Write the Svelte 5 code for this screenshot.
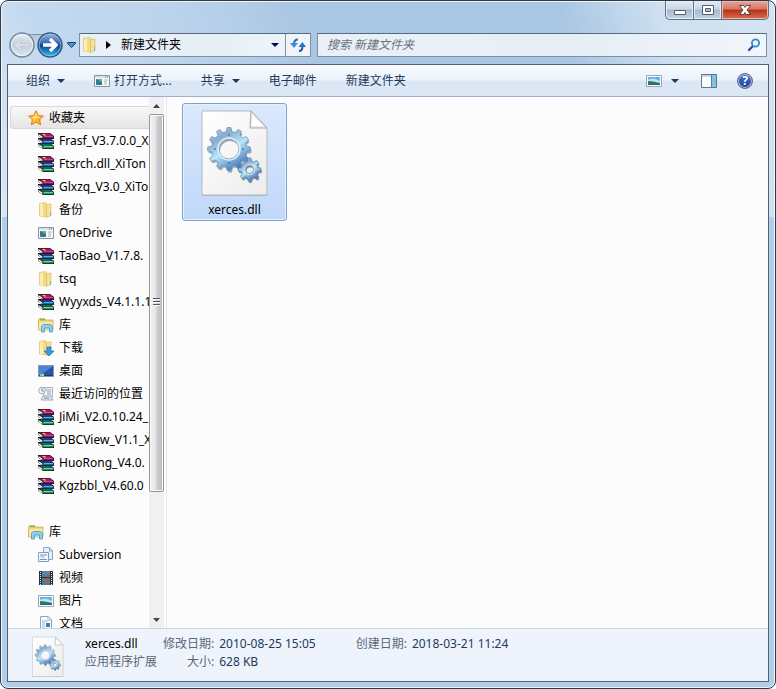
<script lang="ts">
  const favorites = [
    { name: 'Frasf_V3.7.0.0_X', icon: 'rar' },
    { name: 'Ftsrch.dll_XiTon', icon: 'rar' },
    { name: 'Glxzq_V3.0_XiTo', icon: 'rar' },
    { name: '备份', icon: 'folder' },
    { name: 'OneDrive', icon: 'app' },
    { name: 'TaoBao_V1.7.8.', icon: 'rar' },
    { name: 'tsq', icon: 'folder' },
    { name: 'Wyyxds_V4.1.1.1', icon: 'rar' },
    { name: '库', icon: 'library' },
    { name: '下载', icon: 'download' },
    { name: '桌面', icon: 'desktop' },
    { name: '最近访问的位置', icon: 'recent' },
    { name: 'JiMi_V2.0.10.24_', icon: 'rar' },
    { name: 'DBCView_V1.1_X', icon: 'rar' },
    { name: 'HuoRong_V4.0.', icon: 'rar' },
    { name: 'Kgzbbl_V4.60.0', icon: 'rar' }
  ];

  const libraries = [
    { name: 'Subversion', icon: 'documents' },
    { name: '视频', icon: 'video' },
    { name: '图片', icon: 'picture' },
    { name: '文档', icon: 'text' }
  ];

  const groups = [
    { title: '收藏夹', icon: 'star', items: favorites },
    { title: '库', icon: 'library', items: libraries }
  ];

  // Books of the archive icon, bottom one first
  const books = [
    { y: 10, cover: '#0e6b46', spine: '#1f9a66', shine: '#7fe0b4' },
    { y: 5, cover: '#123f86', spine: '#1a62b5', shine: '#7fc0f0' },
    { y: 0, cover: '#a8196b', spine: '#8c0f55', shine: '#e05aa6' }
  ];

  let selectedGroup = $state('收藏夹');
  let selectedFile = $state(true);
  let query = $state('');

  // Outline of a cog with a round hole, drawn with the evenodd rule
  function gear(cx: number, cy: number, teeth: number, outer: number, inner: number, hole: number) {
    const step = (Math.PI * 2) / teeth;
    const points: string[] = [];
    const add = (r: number, a: number) =>
      points.push(`${(cx + r * Math.cos(a)).toFixed(2)} ${(cy + r * Math.sin(a)).toFixed(2)}`);
    for (let i = 0; i < teeth; i++) {
      const a = i * step - Math.PI / 2;
      add(inner, a - step * 0.32);
      add(outer, a - step * 0.17);
      add(outer, a + step * 0.17);
      add(inner, a + step * 0.32);
    }
    return `M${points.join('L')}Z M${cx - hole} ${cy}a${hole} ${hole} 0 1 0 ${hole * 2} 0a${hole} ${hole} 0 1 0 ${-hole * 2} 0Z`;
  }

  const bigGear = gear(28, 39, 12, 21.5, 17.5, 10);
  const smallGear = gear(48.5, 59.5, 8, 11.5, 8.5, 4);
</script>

{#snippet icon(name: string)}
  <svg class="icon" viewBox="0 0 16 16" aria-hidden="true">
    {#if name === 'rar'}
      {#each books as book}
        <g transform="translate(0 {book.y})">
          <path d="M0 0h12l4 3v3H5L0 2.5z" fill="#1a1018" />
          <path d="M1 .6h10.600l3.600 2.400H5z" fill={book.cover} />
          <path d="M5 3h10.500v2.300H5z" fill={book.spine} />
          <path d="M6 3h9v.8H6z" fill={book.shine} />
          <path d="M.4 1l4 2.500v1.700l-4-2.700z" fill="#fff" />
        </g>
      {/each}
      <path d="M4 1h3l1 1.500H6z" fill="#f0cf2a" />
    {:else if name === 'folder' || name === 'download'}
      <path d="M1.500 1.500l6-1 1 1v13.500l-7-1z" fill="#f4db83" stroke="#d9bd68" stroke-width=".6" />
      <path d="M2 2l3-.500v13L2 14z" fill="#fbeeb4" />
      <path d="M8.500 2.500l4.500-.500v11.500l-4.500 2z" fill="#f7e293" stroke="#d2b45c" stroke-width=".6" />
      <path d="M12.500 10v4" stroke="#75b7da" />
      {#if name === 'download'}
        <path d="M9 7h4v4h3l-5 5-5-5h3z" fill="#359be4" stroke="#176fb9" stroke-width=".7" />
      {/if}
    {:else if name === 'app'}
      <path d="M.5 2.5h15v11H.5z" fill="#f7f9fa" stroke="#89959c" />
      <path d="M1 3h14v2H1z" fill="#dbe3e8" />
      <path d="M2 6h6v6H2z" fill="#347d91" />
      <path d="M2 6h6v3z" fill="#69ad9a" />
      <path d="M10 7h4M10 9h3M10 11h3" stroke="#a9b6c0" />
      <path d="M11 4h3" stroke="#526b7a" stroke-dasharray="1 1" />
    {:else if name === 'library'}
      <path d="M.500 3l1-1.500h5l1 1.500h7.500V13H.500z" fill="#f2d876" stroke="#c5a13f" stroke-width=".7" />
      <path d="M1 5h13.500v7.500H1z" fill="#fae9a5" />
      <path d="M2 2.800h5" stroke="#59ad65" />
      <path d="M3.500 15V9l2-1.500h7l2 1.500v6h-3v-4h-5v4z" fill="#8bd0ee" stroke="#399bca" stroke-width=".8" />
    {:else if name === 'desktop'}
      <path d="M.5 2.500h15v11H.5z" fill="#2456a8" stroke="#8797a9" />
      <path d="M1 3h14L3 12H1z" fill="#4c85d4" />
      <path d="M1 12h14v1H1z" fill="#173c70" />
      <path d="M2 11h2v2H2z" fill="#61d4ae" />
      <path d="M4 11h2v2H4z" fill="#f2cb49" />
    {:else if name === 'recent'}
      <path d="M5.5 1.5h9v9h-9z" fill="#eef2f5" stroke="#aab3bc" />
      <path d="M7 4h6M9 6h4M9 8h4" stroke="#91a7b9" />
      <path d="M5 10h8l2 4H3z" fill="#e2e8eb" stroke="#9faab3" />
      <circle cx="4" cy="4.500" r="3.300" fill="#f3f5f7" stroke="#a4adb7" />
      <path d="M4 2v3h2M6 12h5" fill="none" stroke="#738ca2" />
    {:else if name === 'star'}
      <path d="M8 .8l2.200 4.700 5.200.6-3.800 3.500 1 5.200L8 12.200l-4.600 2.600 1-5.200L.6 6.100l5.200-.6z" fill="#ffb32f" stroke="#e87b16" />
      <path d="M8 2.500l1.400 4 4 .6L8 8.500 5 12l.6-3-3-2 3.700-.5z" fill="#ffe16d" />
    {:else if name === 'documents'}
      <path d="M5.500.5h6l3 3v9h-9z" fill="#e5effa" stroke="#8ba9c9" />
      <path d="M11.500 1v3h3" fill="none" stroke="#8ba9c9" />
      <path d="M.5 5.500h10v9H.5z" fill="#f4f8fd" stroke="#7f9fc2" />
      <path d="M2 8h7M2 12.500h7" stroke="#6e97c3" />
      <path d="M2.500 10h4" stroke="#86abd4" />
    {:else if name === 'video'}
      <path d="M1 1h14v14H1z" fill="#25353d" />
      <path d="M4 1h8v6H4z" fill="#408cb9" />
      <path d="M4 8h8v7H4z" fill="#337fae" />
      <path d="M5 4l3 2 4-3v4H4zM6 8l3 3 3-1v3l-5 1z" fill="#b85d42" />
      <path d="M2.500 2v13M13.500 2v13" stroke="#e5edf0" stroke-dasharray="1 1" />
    {:else if name === 'picture'}
      <path d="M.5 2.500h15v11H.5z" fill="#fff" stroke="#9aa8b3" />
      <path d="M2 4h12v8H2z" fill="#66b4e9" />
      <path d="M2 7q4-3 12 1v4H2z" fill="#bee7f4" />
      <path d="M2 8q5 0 12 2v2H2z" fill="#35785d" />
      <path d="M2 11h12v1H2z" fill="#1f629e" />
    {:else if name === 'text'}
      <path d="M2.500.5h8l3 3v12h-11z" fill="#fbfdff" stroke="#91a8bb" />
      <path d="M10 1v3h3M4 5h6M4 7h3M4 9h3M4 11h3M4 13h7" fill="none" stroke="#9db3c8" />
      <path d="M8 7h4v4H8z" fill="#327fbc" />
    {/if}
  </svg>
{/snippet}

{#snippet dllIcon()}
  <svg class="dll" viewBox="0 0 68 87" aria-hidden="true">
    <defs>
      <linearGradient id="paper" x2="1" y2="1">
        <stop stop-color="#fff" />
        <stop offset="1" stop-color="#ececec" />
      </linearGradient>
      <linearGradient id="steel" x2=".6" y2="1">
        <stop stop-color="#c3d3e6" />
        <stop offset=".3" stop-color="#86add2" />
        <stop offset=".6" stop-color="#b6e6fb" />
        <stop offset="1" stop-color="#4579b5" />
      </linearGradient>
    </defs>
    <path d="M2 2h49l15 17v67H2z" fill="#6e7d8c" opacity=".35" />
    <path d="M1 1h49l16 17v67H1z" fill="url(#paper)" stroke="#b5b8bc" />
    <path d="M50 1l-1 17h17z" fill="#e9ebed" stroke="#a8acb0" />
    <path d="M51 4v12h11z" fill="#fff" />
    <path d={bigGear} transform="translate(1 2)" fill="#455e75" opacity=".5" fill-rule="evenodd" />
    <path d={bigGear} fill="url(#steel)" stroke="#6990b2" stroke-width=".7" fill-rule="evenodd" />
    <circle cx="28" cy="39" r="11" fill="none" stroke="#e2edf6" stroke-width="1.5" />
    <g fill="#51799c">
      <circle cx="28" cy="25" r="1" />
      <circle cx="42" cy="39" r="1" />
      <circle cx="28" cy="53" r="1" />
      <circle cx="14" cy="39" r="1" />
    </g>
    <path d={smallGear} transform="translate(1 2)" fill="#3d566f" opacity=".6" fill-rule="evenodd" />
    <path d={smallGear} fill="url(#steel)" stroke="#527ca2" stroke-width=".7" fill-rule="evenodd" />
    <circle cx="48.5" cy="59.5" r="5" fill="none" stroke="#d9eaf7" />
  </svg>
{/snippet}

{#snippet caret()}
  <svg class="caret" viewBox="0 0 8 4" aria-hidden="true"><path d="M0 0h8L4 4z" fill="currentColor" /></svg>
{/snippet}

<div class="window">
  <header>
    <div class="caption">
      <button aria-label="最小化">
        <svg viewBox="0 0 14 12"><path d="M1.500 6.500h11v4h-11z" fill="#fff" stroke="#535d6b" /></svg>
      </button>
      <button aria-label="最大化">
        <svg viewBox="0 0 14 12">
          <path d="M1.500 1.500h11v9h-11z" fill="#fff" stroke="#535d6b" />
          <path d="M4.500 4.500h5v3h-5z" fill="#a9bfd8" stroke="#535d6b" />
        </svg>
      </button>
      <button class="close" aria-label="关闭">
        <svg viewBox="0 0 14 12">
          <path d="M1.500 1.500h4L7 3.500l1.500-2h4L9 6l3.500 4.500h-4L7 8.500l-1.500 2h-4L5 6z" fill="#fff" stroke="#5f4246" />
        </svg>
      </button>
    </div>

    <div class="navigation">
      <div class="history">
        <button class="round" aria-label="后退" disabled>
          <svg viewBox="0 0 26 26">
            <defs>
              <linearGradient id="back" x2="0" y2="1">
                <stop stop-color="#e9eff5" />
                <stop offset=".5" stop-color="#c6d0da" />
                <stop offset="1" stop-color="#dde8f2" />
              </linearGradient>
            </defs>
            <circle cx="13" cy="13" r="12" fill="url(#back)" stroke="#76889a" stroke-width="1.5" />
            <circle cx="13" cy="13" r="10.6" fill="none" stroke="#eef4f8" />
            <path d="M20 13H8M13 7l-6 6 6 6" fill="none" stroke="#b7c3ce" stroke-width="3.6" />
            <path d="M20 13H8M13 7l-6 6 6 6" fill="none" stroke="#d5dee6" stroke-width="2.6" />
          </svg>
        </button>
        <button class="round" aria-label="前进">
          <svg viewBox="0 0 26 26">
            <defs>
              <linearGradient id="forward" x2="0" y2="1">
                <stop stop-color="#9dbbe4" />
                <stop offset=".45" stop-color="#2b62b1" />
                <stop offset=".5" stop-color="#093d91" />
                <stop offset="1" stop-color="#36c0f1" />
              </linearGradient>
            </defs>
            <circle cx="13" cy="13" r="12" fill="url(#forward)" stroke="#38597f" stroke-width="1.5" />
            <circle cx="13" cy="13" r="10.8" fill="none" stroke="#a9cbe9" stroke-width=".7" />
            <path d="M6 13h12M13 7l6 6-6 6" fill="none" stroke="#fff" stroke-width="3.400" />
          </svg>
        </button>
        <button class="recent" aria-label="最近浏览的位置">
          <svg viewBox="0 0 9 7"><path d="M.5.5h8v1l-4 4-4-4z" fill="#479ad1" stroke="#1d426c" /></svg>
        </button>
      </div>

      <div class="address">
        {@render icon('folder')}
        <button class="crumb">
          <svg viewBox="0 0 5 8"><path d="M0 0l5 4-5 4z" /></svg>
          新建文件夹
        </button>
        <button class="drop" aria-label="以前的位置">{@render caret()}</button>
        <button class="refresh" aria-label="刷新">
          <svg viewBox="0 0 16 14">
            <path d="M8 1.500C5 1.500 4 3 4 6" fill="none" stroke="#2b6fb5" stroke-width="2" />
            <path d="M9 13c3 0 3.500-2 3.500-5" fill="none" stroke="#24569a" stroke-width="2" />
            <path d="M0 5h8L4 10z" fill="#3b8fd6" />
            <path d="M8.500 9l4-5 3.500 5z" fill="#2f71b8" />
          </svg>
        </button>
      </div>

      <label class="search">
        <input type="text" aria-label="搜索" placeholder="搜索 新建文件夹" bind:value={query} />
        <svg viewBox="0 0 14 14" aria-hidden="true">
          <path d="M2 12l4-4" stroke="#2f4e92" stroke-width="2.400" stroke-linecap="round" />
          <circle cx="8.500" cy="5" r="3.600" fill="#e8f5fd" stroke="#358bca" stroke-width="1.800" />
        </svg>
      </label>
    </div>
  </header>

  <div class="client">
    <div class="toolbar" role="toolbar" aria-label="命令">
      <button>组织 {@render caret()}</button>
      <button class="open">{@render icon('app')} 打开方式...</button>
      <button>共享 {@render caret()}</button>
      <button>电子邮件</button>
      <button>新建文件夹</button>
      <div class="view">
        <button class="layout" aria-label="更改您的视图">{@render icon('picture')}{@render caret()}</button>
        <button aria-label="预览窗格">
          <svg class="icon" viewBox="0 0 16 16">
            <path d="M.5 1.500h15v13H.5z" fill="#fff" stroke="#5c7795" />
            <path d="M1 2h9v2H1z" fill="#c7d7e8" />
            <path d="M10 2h5v12h-5z" fill="#7fc3dc" />
            <path d="M10.500 2v12" stroke="#4d86a5" />
          </svg>
        </button>
        <button aria-label="帮助">
          <span class="help">?</span>
        </button>
      </div>
    </div>

    <div class="panes">
      <nav>
        <div class="tree">
          {#each groups as group}
            <section>
              <a class="title" class:selected={selectedGroup === group.title} href="#{group.title}" onclick={() => (selectedGroup = group.title)}>
                {@render icon(group.icon)}{group.title}
              </a>
              <ul>
                {#each group.items as item}
                  <li><a href="#{item.name}">{@render icon(item.icon)}{item.name}</a></li>
                {/each}
              </ul>
            </section>
          {/each}
        </div>
        <div class="scrollbar">
          <button aria-label="向上滚动"><svg viewBox="0 0 7 4"><path d="M0 4l3.500-4L7 4z" fill="#444" /></svg></button>
          <div class="track"><div class="thumb"><span class="grip"></span></div></div>
          <button aria-label="向下滚动"><svg viewBox="0 0 7 4"><path d="M0 0h7L3.500 4z" fill="#444" /></svg></button>
        </div>
      </nav>

      <main>
        <button class="file" class:selected={selectedFile} aria-pressed={selectedFile} onclick={() => (selectedFile = !selectedFile)}>
          {@render dllIcon()}
          <span>xerces.dll</span>
        </button>
      </main>
    </div>

    <footer>
      {@render dllIcon()}
      <div class="summary">
        <strong>xerces.dll</strong>
        <span>应用程序扩展</span>
      </div>
      <dl>
        <dt>修改日期:</dt><dd>2010-08-25 15:05</dd>
        <dt>大小:</dt><dd>628 KB</dd>
      </dl>
      <dl class="created">
        <dt>创建日期:</dt><dd>2018-03-21 11:24</dd>
      </dl>
    </footer>
  </div>
</div>

<style>
  :global(body) {
    background: #fff;
  }

  .window {
    box-sizing: border-box;
    height: 100vh;
    display: flex;
    flex-direction: column;
    padding: 0 6px 6px;
    border: 1px solid #2f3a49;
    border-radius: 8px;
    box-shadow: inset 0 0 0 1px #eef6fd;
    background:
      linear-gradient(75deg, #d9e7f6 0, #c3d9ef 10%, #bfd6ed 20%, #b6cfe9 34%, #a9c6e2 42%, #a9c7e3 74%, #cfe0f1 86%, #d3e3f4 100%) 0 0 / 100% 216px no-repeat,
      #b0cdea;
    font: 12px/18px 'Noto Sans', 'Noto Sans CJK SC', sans-serif;
    color: #000;
    overflow: hidden;
  }

  button {
    display: flex;
    align-items: center;
    padding: 0;
    border: 0;
    background: none;
    font: inherit;
    color: inherit;
    white-space: nowrap;
  }

  .icon {
    width: 16px;
    height: 16px;
    flex: none;
  }

  .caret {
    width: 8px;
    height: 4px;
    flex: none;
  }

  .caption {
    display: flex;
    justify-content: flex-end;
    height: 19px;
  }

  .caption button {
    box-sizing: border-box;
    justify-content: center;
    width: 28px;
    border: solid #5f6f83;
    border-width: 0 0 1px 1px;
    background: linear-gradient(#e3ebf4 0, #c9d6e5 45%, #a7b9cd 50%, #c4d4e5 100%);
    box-shadow: inset 0 0 0 1px #e6eff8;
  }

  .caption button:first-child {
    border-bottom-left-radius: 5px;
  }

  .caption .close {
    width: 48px;
    border-right-width: 1px;
    border-bottom-right-radius: 5px;
    background: linear-gradient(#e5a696 0, #d67863 45%, #b83119 50%, #d96f4d 100%);
    box-shadow: inset 0 0 0 1px #edb9ac;
  }

  .caption svg {
    width: 14px;
    height: 12px;
  }

  .navigation {
    display: flex;
    align-items: center;
    padding: 12px 2px 6px;
  }

  .history {
    display: flex;
    align-items: center;
    gap: 2px;
    width: 70px;
    background: linear-gradient(#7f95ab 0 1px, #b4c8dc 1px, #c6d8ea) 12px 2px / 28px 10px no-repeat;
  }

  .round svg {
    display: block;
    width: 26px;
    height: 26px;
  }

  .recent {
    padding-left: 2px;
  }

  .recent svg {
    width: 9px;
    height: 7px;
  }

  .address,
  .search {
    box-sizing: border-box;
    display: flex;
    align-items: center;
    height: 24px;
    border: 1px solid #7d90a5;
    border-top-color: #57697d;
    background: linear-gradient(90deg, #e9f0f8, #e6eef6 60%, #f1f6fc);
  }

  .address {
    flex: 3 1 0;
    max-width: 232px;
    padding-left: 2px;
  }

  .crumb {
    flex: 1;
    gap: 10px;
    padding-left: 8px;
  }

  .crumb svg {
    width: 5px;
    height: 8px;
  }

  .drop {
    padding: 0 6px;
    color: #060653;
  }

  .refresh {
    justify-content: center;
    width: 25px;
    height: 22px;
    border-left: 1px solid #7d90a5;
  }

  .refresh svg {
    width: 16px;
    height: 14px;
  }

  .search {
    flex: 5 1 0;
    margin-left: 6px;
    padding: 0 5px 0 9px;
  }

  .search input {
    flex: 1;
    min-width: 0;
    padding: 0;
    border: 0;
    outline: 0;
    background: none;
    font: inherit;
  }

  .search input::placeholder {
    color: #68727d;
    font-style: italic;
    opacity: 1;
  }

  .search svg {
    width: 14px;
    height: 14px;
  }

  .client {
    flex: 1;
    min-height: 0;
    display: flex;
    flex-direction: column;
    border: 1px solid #52606f;
    background: #fcfcfc;
  }

  .toolbar {
    display: flex;
    align-items: center;
    gap: 29px;
    height: 31px;
    padding: 0 15px 0 18px;
    border-bottom: 1px solid #9fafcb;
    background: linear-gradient(#fafcff 0, #eaf2fb 48%, #dce7f5 52%, #dde8f6 100%);
    color: #1e395b;
  }

  .toolbar button {
    gap: 7px;
  }

  .toolbar .open {
    gap: 4px;
  }

  .view {
    display: flex;
    align-items: center;
    gap: 20px;
    margin-left: auto;
  }

  .view .layout {
    gap: 9px;
    padding-right: 2px;
  }

  .help {
    box-sizing: border-box;
    width: 16px;
    height: 16px;
    border: 1px solid #626c85;
    border-radius: 50%;
    background: linear-gradient(#4d74d4, #173c9f);
    box-shadow: inset 0 0 0 1px #b9c4df;
    color: #fff;
    font-weight: bold;
    line-height: 14px;
    text-align: center;
  }

  .panes {
    flex: 1;
    min-height: 0;
    display: flex;
  }

  nav {
    flex: none;
    display: flex;
    width: 158px;
    border-right: 1px solid #dfe8f3;
  }

  .tree {
    flex: 1;
    min-width: 0;
    padding: 9px 0 0 2px;
    overflow: hidden;
  }

  section {
    margin-bottom: 23px;
  }

  ul {
    margin: 0;
    padding: 0;
    list-style: none;
  }

  .tree a {
    box-sizing: border-box;
    display: flex;
    align-items: center;
    gap: 5px;
    height: 23px;
    padding-left: 28px;
    color: #000;
    text-decoration: none;
    white-space: nowrap;
  }

  .tree .title {
    padding-left: 17px;
    border: 1px solid transparent;
    border-right: 0;
  }

  .tree .title.selected {
    border-color: #d9d9d9;
    border-radius: 3px 0 0 3px;
    background: linear-gradient(#f8f8f8, #e5e5e5);
  }

  .scrollbar {
    display: flex;
    flex-direction: column;
    width: 15px;
    margin-right: 2px;
    background: #f0f0f0;
  }

  .scrollbar button {
    justify-content: center;
    height: 17px;
  }

  .scrollbar svg {
    width: 7px;
    height: 4px;
  }

  .track {
    flex: 1;
  }

  .thumb {
    box-sizing: border-box;
    display: grid;
    place-items: center;
    height: 76%;
    border: 1px solid #979797;
    border-radius: 2px;
    background: linear-gradient(90deg, #f4f4f4 0, #e4e4e6 45%, #cdcdd1 55%, #b9b9be 100%);
    box-shadow: inset 0 0 0 1px #f7f7f7;
  }

  .grip {
    width: 7px;
    height: 9px;
    background: repeating-linear-gradient(#555 0 1px, #fafafa 1px 2px, transparent 2px 3px);
  }

  main {
    flex: 1;
    padding: 6px 15px;
    overflow: hidden;
  }

  .file {
    box-sizing: border-box;
    flex-direction: column;
    width: 105px;
    gap: 4px;
    padding: 6px 0 1px;
    border: 1px solid transparent;
    border-radius: 3px;
  }

  .file.selected {
    border-color: #7da2ce;
    background: linear-gradient(#dbe9fc, #c0d8fa);
    box-shadow: inset 0 0 0 1px #e6f0fd;
  }

  .file .dll {
    width: 68px;
    height: 87px;
  }

  footer {
    display: flex;
    align-items: flex-start;
    height: 46px;
    padding: 6px 24px 0;
    border-top: 1px solid #c5d5e8;
    background: #eff4fc;
    color: #5a6779;
  }

  footer .dll {
    flex: none;
    width: 32px;
    height: 42px;
    margin-top: 1px;
  }

  .summary {
    display: flex;
    flex-direction: column;
    margin-left: 21px;
  }

  .summary strong {
    color: #000;
    font-weight: normal;
  }

  dl {
    display: grid;
    grid-template-columns: auto auto;
    column-gap: 5px;
    margin: 0 0 0 6px;
  }

  dl.created {
    margin-left: 40px;
  }

  dt {
    text-align: right;
  }

  dd {
    margin: 0;
    color: #1e395b;
  }
</style>
